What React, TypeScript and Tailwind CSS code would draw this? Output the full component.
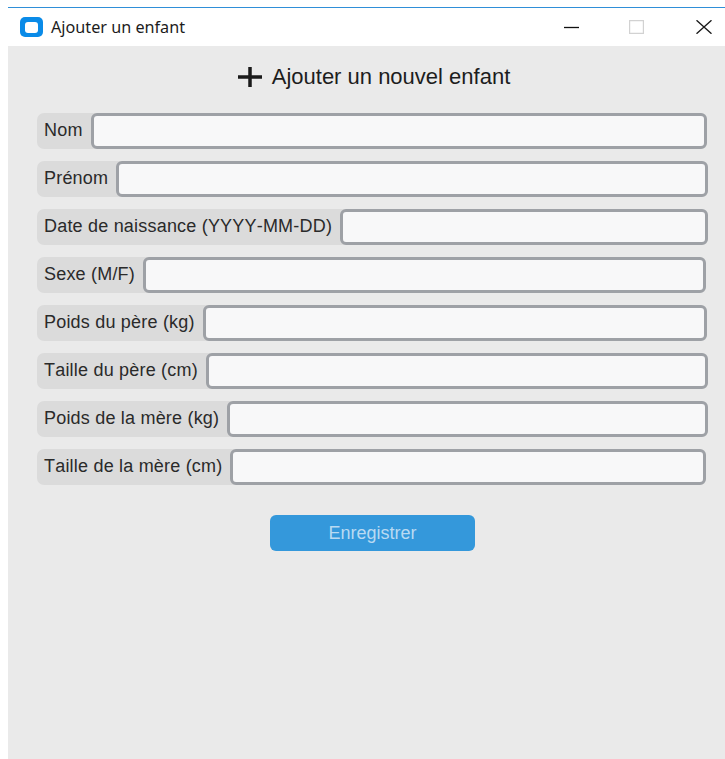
// Champs du formulaire, dans l'ordre d'affichage
const FIELDS = [
  { label: 'Nom', trim: 'mr-[1px]' },
  { label: 'Prénom', trim: 'mr-0' },
  { label: 'Date de naissance (YYYY-MM-DD)', trim: 'mr-0' },
  { label: 'Sexe (M/F)', trim: 'mr-[2px]' },
  { label: 'Poids du père (kg)', trim: 'mr-[1px]' },
  { label: 'Taille du père (cm)', trim: 'mr-0' },
  { label: 'Poids de la mère (kg)', trim: 'mr-0' },
  { label: 'Taille de la mère (cm)', trim: 'mr-[2px]' },
]

function AppIcon() {
  return (
    <div className="flex h-[20px] w-[23px] items-center justify-center rounded-[5px] bg-[#0a8be8]">
      <div className="h-[11px] w-[13px] rounded-[3px] bg-white" />
    </div>
  )
}

function WindowButtons() {
  return (
    <div className="ml-auto mr-[13px] flex items-center">
      <svg width="15" height="14" viewBox="0 0 15 14" stroke="#111" strokeWidth="1.3">
        <path d="M0 7.5h15" />
      </svg>
      <svg className="ml-[50px]" width="15" height="14" viewBox="0 0 15 14" fill="none" stroke="#d2d2d2" strokeWidth="1.2">
        <path d="M.6.6h13.8v12.8H.6z" />
      </svg>
      <svg className="ml-[52px]" width="16" height="14" viewBox="0 0 16 14" fill="none" stroke="#1a1a1a" strokeWidth="1.4">
        <path d="M.5.3l15 13.4M15.5.3L.5 13.7" />
      </svg>
    </div>
  )
}

function TitleBar() {
  return (
    <div className="flex h-[38px] items-center bg-white pl-[12px] text-[#1c1c1c]">
      <AppIcon />
      <span className="ml-[8px] text-[16.2px]" style={{ fontFamily: '"Noto Sans", sans-serif' }}>
        Ajouter un enfant
      </span>
      <WindowButtons />
    </div>
  )
}

function FieldRow({ label, trim }: { label: string; trim: string }) {
  return (
    <div className={`flex h-[36px] items-stretch rounded-[7px] bg-[#dbdbdb] ${trim}`}>
      <label className="flex items-center whitespace-nowrap pb-[3px] pl-[7px] pr-[8px] text-[18px] leading-none tracking-[0.2px] text-[#2a2a2a] [font-kerning:none]">
        {label}
      </label>
      <input
        type="text"
        className="min-w-0 flex-1 rounded-[6px] border-[3px] border-[#9ea1a6] bg-[#f8f8f9] px-2 outline-none"
      />
    </div>
  )
}

export default function App() {
  return (
    <div
      className="h-[759px] w-[725px] bg-white pl-[8px] pt-[7px]"
      style={{ fontFamily: '"Liberation Sans", Arial, sans-serif' }}
    >
      <div className="flex h-[752px] flex-col border-t border-[#2f8fd8]">
        <TitleBar />
        <main className="flex-1 bg-[#eaeaea] pl-[29px] pr-[17px]">
          <h1 className="mt-[16px] flex items-center justify-center gap-[10px] pl-[3px] text-[22px] leading-[30px] text-[#1d1d1d]">
            <svg width="24" height="20" viewBox="0 0 24 20" stroke="#1a1a1a" strokeWidth="3.5">
              <path d="M0 10h24M12 0v20" />
            </svg>
            Ajouter un nouvel enfant
          </h1>
          <div className="mt-[21px] flex flex-col gap-[12px]">
            {FIELDS.map((field) => (
              <FieldRow key={field.label} label={field.label} trim={field.trim} />
            ))}
          </div>
          <div className="mt-[30px] flex justify-center">
            <button
              type="button"
              className="h-[36px] w-[205px] rounded-[6px] bg-[#3498db] text-[18px] text-[#b9daf2]"
            >
              Enregistrer
            </button>
          </div>
        </main>
      </div>
    </div>
  )
}
